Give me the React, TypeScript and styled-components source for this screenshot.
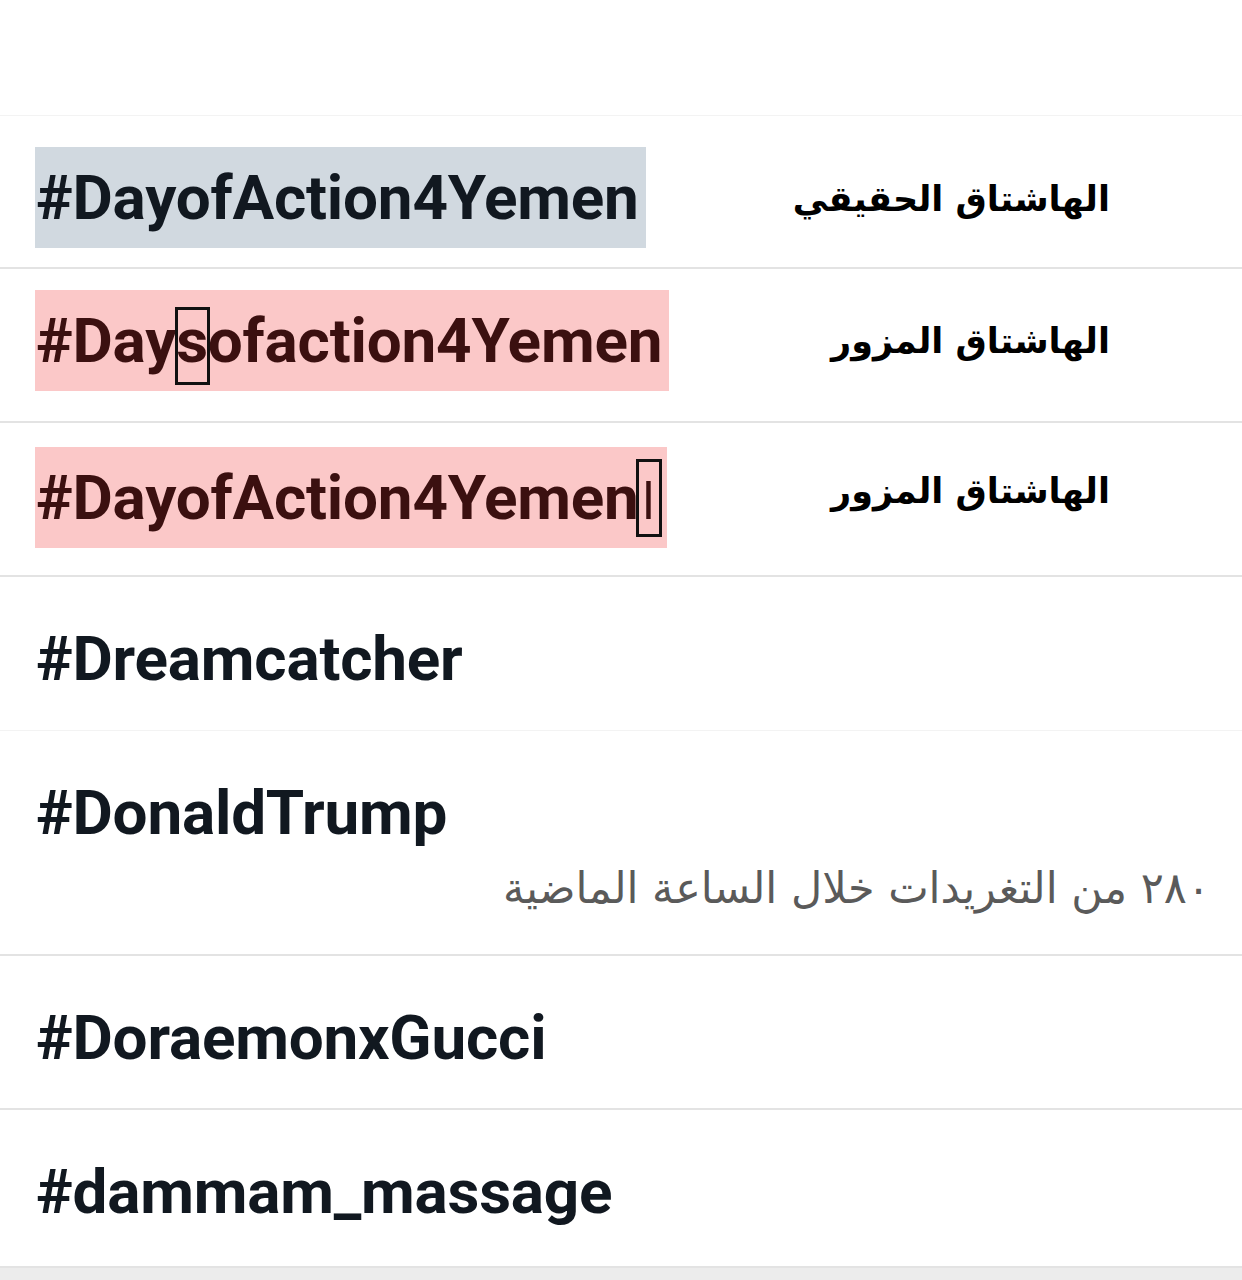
import React from 'react';
import styled, { createGlobalStyle } from 'styled-components';

const Global = createGlobalStyle`
  body {
    margin: 0;
    background: #ffffff;
  }
`;

type Mark = 'real' | 'fake' | undefined;

const Page = styled.div`
  width: 1242px;
  height: 1280px;
  background: #ffffff;
  overflow: hidden;
`;

const Top = styled.div`
  height: 115px;
  border-bottom: 1px solid #f3f3f3;
`;

const Row = styled.div<{ $h: number; $pt?: number; $faint?: boolean }>`
  height: ${(p) => p.$h}px;
  border-bottom: ${(p) => (p.$faint ? '1px solid #f3f3f3' : '2px solid #e3e3e3')};
  box-sizing: border-box;
  padding: ${(p) => p.$pt ?? 31}px 35px 0 35px;
  display: flex;
  flex-direction: column;
`;

const Line = styled.div`
  display: flex;
  align-items: center;
  justify-content: space-between;
`;

const Tag = styled.span<{ $mark: Mark }>`
  font-family: Roboto, 'Liberation Sans', sans-serif;
  font-weight: 700;
  font-size: 62px;
  line-height: 101px;
  height: 101px;
  letter-spacing: -0.2px;
  padding: 0 7px 0 1px;
  white-space: nowrap;
  color: ${(p) => (p.$mark === 'fake' ? '#3b1010' : '#111820')};
  background: ${(p) =>
    p.$mark === 'real' ? '#d1d9e0' : p.$mark === 'fake' ? '#fbc8c8' : 'transparent'};
`;

/* black frame drawn over one letter to show the difference */
const Boxed = styled.span`
  position: relative;
  &::after {
    content: '';
    position: absolute;
    top: 3px;
    bottom: -8px;
    left: -1px;
    right: -2px;
    border: 3px solid #111;
  }
`;

const Alef = styled(Boxed)`
  font-family: 'DejaVu Sans', sans-serif;
  font-weight: 400;
  font-size: 50px;
  padding: 0 6px;
  margin-left: -3px;
  margin-right: -2px;
  &::after {
    top: -14px;
    bottom: -6px;
    left: 0;
    right: 0;
  }
`;

const Label = styled.span<{ $dy?: number }>`
  font-family: 'DejaVu Sans', sans-serif;
  font-weight: 700;
  font-size: 35px;
  color: #000;
  direction: rtl;
  margin-right: 97px;
  margin-top: ${(p) => p.$dy ?? -4}px;
`;

const Sub = styled.div`
  font-family: 'DejaVu Sans', sans-serif;
  font-size: 43px;
  color: #5a5a5a;
  direction: rtl;
  text-align: right;
  margin-right: -3px;
`;

const Bottom = styled.div`
  height: 12px;
  background: #ececec;
`;

const App: React.FC = () => {
  return (
    <Page>
      <Global />
      <Top />
      <Row $h={153}>
        <Line>
          <Tag $mark="real">#DayofAction4Yemen</Tag>
          <Label $dy={2}>الهاشتاق الحقيقي</Label>
        </Line>
      </Row>
      <Row $h={154} $pt={21}>
        <Line>
          <Tag $mark="fake">
            #Day<Boxed>s</Boxed>ofaction4Yemen
          </Tag>
          <Label $dy={0}>الهاشتاق المزور</Label>
        </Line>
      </Row>
      <Row $h={154} $pt={24}>
        <Line>
          <Tag $mark="fake">
            #DayofAction4Yemen<Alef>ا</Alef>
          </Tag>
          <Label $dy={-14}>الهاشتاق المزور</Label>
        </Line>
      </Row>
      <Row $h={154} $faint>
        <Line>
          <Tag $mark={undefined}>#Dreamcatcher</Tag>
        </Line>
      </Row>
      <Row $h={225}>
        <Line>
          <Tag $mark={undefined}>#DonaldTrump</Tag>
        </Line>
        <Sub>٢٨٠ من التغريدات خلال الساعة الماضية</Sub>
      </Row>
      <Row $h={154}>
        <Line>
          <Tag $mark={undefined}>#DoraemonxGucci</Tag>
        </Line>
      </Row>
      <Row $h={158}>
        <Line>
          <Tag $mark={undefined}>#dammam_massage</Tag>
        </Line>
      </Row>
      <Bottom />
    </Page>
  );
};

export default App;
